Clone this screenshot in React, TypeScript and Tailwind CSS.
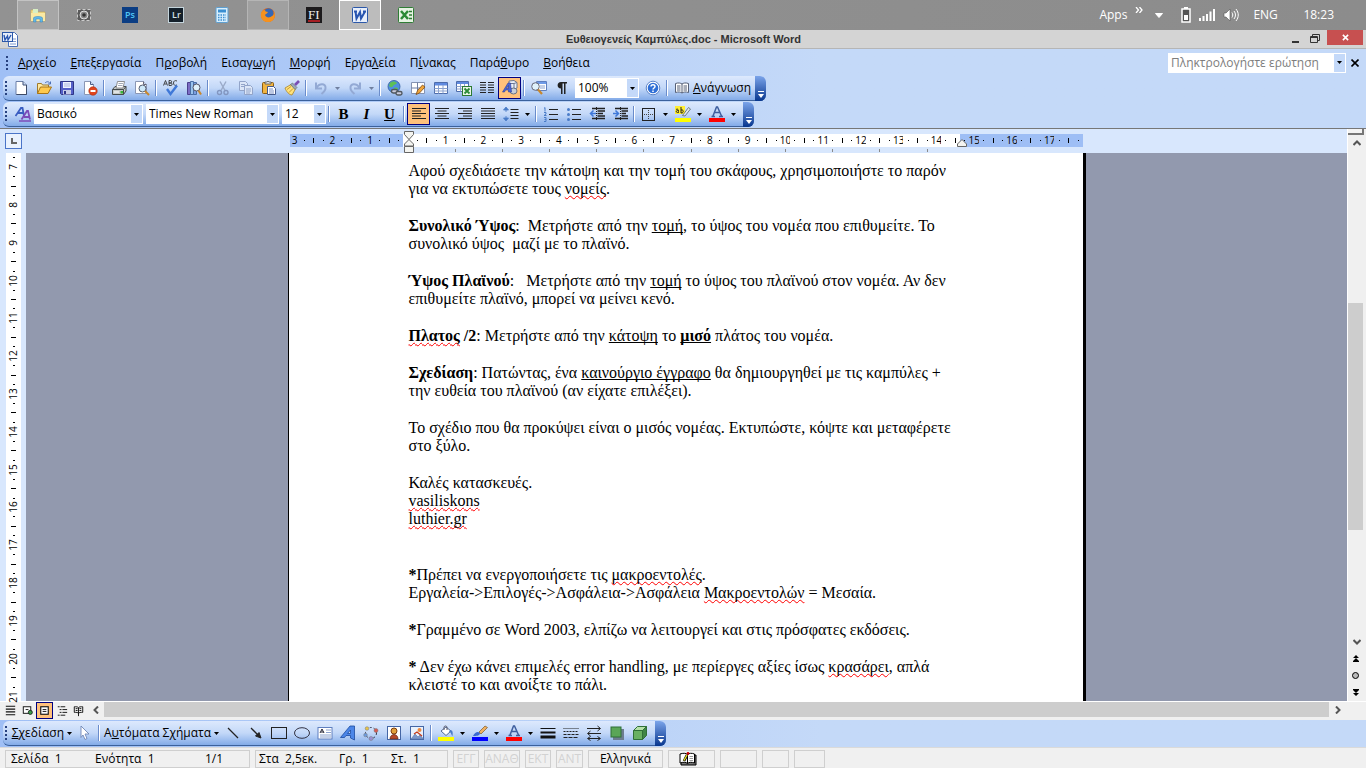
import type { ReactNode } from "react";

type IconName = keyof typeof icons

const ui = "font-['Open_Sans','Noto_Sans',sans-serif]"

const icons = {
    // Standard toolbar
    newDoc: <><path d="M3 1.500h7l3.500 3.500v9.500h-10.500z" fill="#fff" stroke="#6b7fa8" /><path d="M10 1.500v3.500h3.500" fill="#cfdcf2" stroke="#3d5078" /><path d="M3.500 14.500h10V5" fill="none" stroke="#3d4a66" /></>,
    open: <><path d="M1.500 13.500V3.500h4l1 1.500h6v3" fill="#ffe9a0" stroke="#a07a2a" /><path d="M1.500 13.500l3-6.500h11l-3.500 6.500z" fill="#ffc94d" stroke="#a87417" /><path d="M9 3c2-2 4-1.500 5 .5M14.500 1.500v2.500h-2.500" fill="none" stroke="#4b6fb5" /></>,
    save: <><path d="M1.500 1.500h13v13h-12l-1-1z" fill="#5560c8" stroke="#2e3586" /><rect x="4" y="2" width="8" height="6" fill="#eef2ff" /><path d="M5 4h6M5 6h6" stroke="#a9b5dd" /><rect x="4" y="10" width="8" height="4.500" fill="#c7cde8" /><rect x="5" y="11" width="2" height="3" fill="#2e3586" /></>,
    permission: <><path d="M2.500 1.500h6l3 3v10h-9z" fill="#fff" stroke="#8a97b5" /><path d="M8.500 1.500v3h3" fill="#cfdcf2" stroke="#4a5d88" /><circle cx="11" cy="11" r="4.200" fill="#e0451f" stroke="#a92a0d" strokeWidth=".6" /><path d="M8.500 11h5" stroke="#fff" strokeWidth="2" /></>,
    print: <><path d="M1.500 9.500l2.500-3h11v4.500l-2.500 3.500h-11z" fill="#c4c9c8" stroke="#454b4d" /><path d="M5 8l1.500-6.500h7L12 8z" fill="#fff" stroke="#777" strokeWidth=".8" /><path d="M7.500 3.500h4.500M7 5.500h4.500" stroke="#8a93a5" strokeWidth=".8" /><path d="M1.500 9.500h11v5M12.500 9.500l2.500-3" fill="none" stroke="#454b4d" /><path d="M3 12h5" stroke="#fff" /><rect x="9.500" y="11" width="2.500" height="2.500" fill="#35b535" /></>,
    preview: <><path d="M1.500 1.500h8l3 3v9h-11z" fill="#fff" stroke="#8a97b5" /><path d="M9.500 1.500v3h3" fill="#cfdcf2" stroke="#667" /><circle cx="8.500" cy="8.500" r="3.500" fill="#cfeafa" stroke="#555d70" /><path d="M11 11l4 4" stroke="#c8872c" strokeWidth="2" /></>,
    spell: <><path d="M.5 5.500l2-5 2 5M1.500 4h2M6 .5v5h2c1.500 0 1.500-2.500 0-2.500H6h1.500C9 3 9 .5 7.500.5zM14 1c-2-1-3.500 0-3.500 2s1.500 3 3.500 2" fill="none" stroke="#333" strokeWidth=".9" /><path d="M4 9l3.500 5L14 5.500" fill="none" stroke="#3f78d8" strokeWidth="2.400" /></>,
    research: <><path d="M1.500 2.500h3v12h-3z" fill="#7b6cc4" stroke="#4b3f8e" /><path d="M4.500 1.500h3v13h-3z" fill="#9ac3ee" stroke="#4a6ea6" /><path d="M7.500 2.500h3v12h-3z" fill="#7b9ee0" stroke="#4a6ea6" /><circle cx="10.500" cy="7.500" r="3.500" fill="#dff1fb" stroke="#556" /><path d="M12.500 10.500l2.500 4" stroke="#c8872c" strokeWidth="2" /></>,
    cut: <><path d="M5 1.500l5 9M11 1.500l-5 9" stroke="#9aaac8" strokeWidth="1.400" /><circle cx="4.500" cy="12.500" r="2" fill="none" stroke="#8296c0" strokeWidth="1.400" /><circle cx="11" cy="12.500" r="2" fill="none" stroke="#8296c0" strokeWidth="1.400" /></>,
    copy: <><path d="M1.500 1.500h6l2 2v7h-8z" fill="#dce6f7" stroke="#92a4c9" /><path d="M6.500 5.500h6l2 2v7h-8z" fill="#dce6f7" stroke="#92a4c9" /><path d="M3 4.500h4M3 6.500h3M8 9h5M8 11h5M8 13h4" stroke="#92a4c9" /></>,
    paste: <><rect x="1.500" y="2.500" width="11" height="11" rx="1" fill="#f0b440" stroke="#8a5c13" /><path d="M4 4V2h2l1-1 1 1h2v2z" fill="#ddd" stroke="#555" strokeWidth=".8" /><path d="M6.500 6.500h6l2 2v6h-8z" fill="#fff" stroke="#44598b" /><path d="M8 9h4M8 11h5M8 13h5" stroke="#7b91c5" /></>,
    painter: <><path d="M1 8l6-3.500 4.500 4.500-3.500 6c-3 0-6-4-7-7z" fill="#ffe27a" stroke="#a98326" strokeWidth=".8" /><path d="M3 9.500l4-3M5 12.500l4-4" stroke="#c99a34" /><path d="M6.500 4.500l2-1.500 4.500 4.500-2 2z" fill="#9ba6b8" stroke="#566" strokeWidth=".6" /><path d="M11 5l4-4" stroke="#7a4eb5" strokeWidth="2.600" /></>,
    undo: <path d="M3 2.500v6h6M3.500 8C6 3 13 3 12.500 8c0 2.500-1.500 4-4 6" fill="none" stroke="#93a9d4" strokeWidth="2" />,
    redo: <path d="M13 2.500v6H7M12.500 8C10 3 3 3 3.500 8c0 2.500 1.500 4 4 6" fill="none" stroke="#93a9d4" strokeWidth="2" />,
    globe: <><circle cx="7" cy="6.500" r="6" fill="#4f8fe0" stroke="#2d5a9c" strokeWidth=".8" /><path d="M3 3c2-2 5-2 7 0-1 2-3 1-4 3s-3 1-4 0zM7 8c2-1 4 0 4 1l-3 3z" fill="#5dc055" /><rect x="4.500" y="9.500" width="6" height="3.500" rx="1.700" fill="#ccd" stroke="#50585f" strokeWidth="1.400" /><rect x="9" y="11.500" width="6" height="3.500" rx="1.700" fill="#ccd" stroke="#50585f" strokeWidth="1.400" /></>,
    drawTable: <><path d="M1.500 2.500h13v11h-13z" fill="#fff" stroke="#8593b2" /><path d="M7.500 2.500v11M1.500 8h13" stroke="#6f7fa3" /><path d="M6 14.500l1.500-4 5-5.500 2.500 2-5.500 6z" fill="#f1a63c" stroke="#7b4a14" strokeWidth=".8" /></>,
    table: <><path d="M1.500 2.500h13v11h-13z" fill="#fff" stroke="#4d6cab" /><rect x="2" y="3" width="12" height="2.500" fill="#5f8ae0" /><path d="M1.500 8.500h13M1.500 11h13M5.500 5v8.500M10 5v8.500" stroke="#8ba2cf" /></>,
    excelTable: <><path d="M.5 1.500h12v10H.5z" fill="#fff" stroke="#4d6cab" /><rect x="1" y="2" width="11" height="2" fill="#5f8ae0" /><path d="M.5 6.500h12M.5 9h12M4.500 4v7.500M8.500 4v7.500" stroke="#8ba2cf" /><rect x="6.500" y="6.500" width="9" height="9" fill="#e9f6e7" stroke="#2c7a33" /><path d="M8.500 8.500l5 5M13.500 8.500l-5 5" stroke="#2a8a35" strokeWidth="1.800" /></>,
    columns: <path d="M1 2.500h6M1 5h6M1 7.500h6M1 10h6M1 12.500h6M9 2.500h6M9 5h6M9 7.500h6M9 10h6M9 12.500h6" stroke="#222" strokeWidth="1.200" />,
    drawing: <><path d="M7 1l5-.5 3 2V8l-3 1H7z" fill="#e9eef8" stroke="#6d7890" /><path d="M12 3.500V9M12 3.500l3-1M12 3.500H7" stroke="#6d7890" fill="none" /><ellipse cx="11.500" cy="11" rx="3.500" ry="3" fill="#c8ced8" stroke="#697284" /><path d="M.5 12L6 3h2.500l1 9H6.500v-2H3.500l-1 2zM4.500 8.500h2V5.500z" fill="#4a66d8" stroke="#2c3f99" strokeWidth=".6" fillRule="evenodd" /></>,
    docMap: <><path d="M5.500 1.500h10v9h-10z" fill="#fff" stroke="#5f7fbf" /><rect x="6" y="2" width="9" height="2" fill="#6f9be8" /><path d="M9 6h5M9 8h5" stroke="#8ba2cf" /><circle cx="4.500" cy="6.500" r="3.800" fill="#dff1fb" stroke="#667" /><path d="M7 9.500l4 4.500" stroke="#c8872c" strokeWidth="2.200" /></>,
    pilcrow: <path d="M13 2H7C2.500 2 2.500 8.500 7 8.500V14h1.500V3.500H10V14h1.500V3.500H13z" fill="#222" />,
    help: <><circle cx="8" cy="8" r="6.800" fill="#fff" stroke="#5c84c9" /><circle cx="8" cy="8" r="5.300" fill="#2f6fd6" /><path d="M6 6.500c0-2.500 4-2.500 4 0 0 1.500-2 1.500-2 3M8 10.500v1.500" fill="none" stroke="#fff" strokeWidth="1.500" /></>,
    book: <><path d="M1.500 3.500c3-1 5-.5 6.500.5 1.500-1 3.500-1.500 6.500-.5v9c-3-1-5-.5-6.500.5-1.500-1-3.500-1.500-6.500-.5z" fill="#fff" stroke="#555f75" /><path d="M8 4v9M3 6h3.500M3 8h3.500M3 10h3.500M9.500 6H13M9.500 8H13M9.500 10H13" stroke="#555f75" /></>,
    // Formatting toolbar
    styles: <><path d="M.5 10L6 2h1.500L9 10M3 7h5.500" fill="none" stroke="#3a5dc0" strokeWidth="1.800" /><path d="M6.500 13.500L12 5h1l2 8.500M9 11h5.500" fill="none" stroke="#7b4bb8" strokeWidth="1.800" /><path d="M4 15h12" stroke="#7b4bb8" strokeWidth="1.500" /></>,
    left: <path d="M1 2.500h14M1 5h9M1 7.500h14M1 10h9M1 12.500h14" stroke="#222" strokeWidth="1.200" />,
    center: <path d="M1 2.500h14M3.500 5h9M1 7.500h14M3.500 10h9M1 12.500h14" stroke="#222" strokeWidth="1.200" />,
    right: <path d="M1 2.500h14M6 5h9M1 7.500h14M6 10h9M1 12.500h14" stroke="#222" strokeWidth="1.200" />,
    justify: <path d="M1 2.500h14M1 5h14M1 7.500h14M1 10h14M1 12.500h14" stroke="#222" strokeWidth="1.200" />,
    spacing: <><path d="M3 1L.5 4h5zM3 15L.5 12h5zM3 3v3M3 10v3" fill="#4a7cc8" stroke="#4a7cc8" strokeWidth=".8" /><path d="M7.500 3.500h8M7.500 6.500h8M7.500 9.500h8M7.500 12.500h8" stroke="#222" /></>,
    numbered: <><path d="M6 3.500h9M6 8.500h9M6 13.500h9" stroke="#222" /><path d="M2 1.500v4M1 2h1M1 6.500h2v1.500L1 9.500h2.500M1 11.500h2v4H1M1.500 13.500H3" fill="none" stroke="#4a7cc8" /></>,
    bullets: <><path d="M6 3.500h9M6 8.500h9M6 13.500h9" stroke="#222" /><circle cx="2.500" cy="3.500" r="1.500" fill="#4a7cc8" /><circle cx="2.500" cy="8.500" r="1.500" fill="#4a7cc8" /><circle cx="2.500" cy="13.500" r="1.500" fill="#4a7cc8" /></>,
    outdent: <><path d="M3 2.500h13M8.500 5H16M8.500 7.500H14M8.500 10H16M3 12.500h13" stroke="#222" strokeWidth="1.400" /><path d="M7 7.500H2M4.500 4.500l-3 3 3 3" fill="none" stroke="#3f78d8" strokeWidth="1.500" /><path d="M7.500 1v14" stroke="#222" strokeDasharray="1 1" /></>,
    indent: <><path d="M3 2.500h13M9.500 5H16M9.500 7.500H14M9.500 10H16M3 12.500h13" stroke="#222" strokeWidth="1.400" /><path d="M1 7.500h5M3.500 4.500l3 3-3 3" fill="none" stroke="#3f78d8" strokeWidth="1.500" /><path d="M8.500 1v14" stroke="#222" strokeDasharray="1 1" /></>,
    border: <><rect x="1.500" y="2.500" width="12" height="12" fill="none" stroke="#222" /><path d="M7.500 4v9.500M3 8.500h9.500" stroke="#444" strokeDasharray="1 1" /></>,
    highlight: <><rect x="0" y="0" width="10" height="8" fill="#ffee32" /><path d="M1 3.500c2-1 2.500 0 2.500 3-3 .5-3-2.500 0-2M6 1v6c3 .5 3-4 0-3" fill="none" stroke="#222" /><path d="M7.500 9.500l6-8 2 1.500-5.500 7z" fill="#dfe6f0" stroke="#566" strokeWidth=".8" /><rect x="0" y="12" width="16" height="4" fill="#ff0" /></>,
    fontColor: <><path d="M4 10l3.500-9h1l4 9M5.500 6.500h5.500M2.500 10.500h3.500M10 10.500h4" fill="none" stroke="#3f5f9f" strokeWidth="1.500" /><rect x="0" y="12" width="16" height="4" fill="#f00" /></>,
    // Drawing toolbar
    pointer: <path d="M4 1l8 8H8l2 4.500-2 1L6 10l-2 2.500z" fill="#fff" stroke="#7187b5" strokeWidth=".9" />,
    line: <path d="M3 3l10 10" stroke="#222" strokeWidth="1.200" />,
    arrow: <><path d="M3 3l7 7" stroke="#222" strokeWidth="1.300" /><path d="M13 13L7.500 11 11 7.500z" fill="#222" stroke="#222" /></>,
    rect: <rect x=".5" y="2.500" width="15" height="11" fill="none" stroke="#222" />,
    oval: <ellipse cx="8" cy="8" rx="7.500" ry="5.300" fill="none" stroke="#334" />,
    textBox: <><rect x="1" y="2.500" width="14" height="11.500" fill="#fff" stroke="#5f7fbf" /><path d="M3 8l2-4 2 4M4 7h2.500" fill="none" stroke="#223" /><path d="M9 5h5M9 7.500h5M3 10h11M3 12h11" stroke="#8ba2cf" /></>,
    wordArt: <path d="M.5 12.500L10 1h4.500v14l-4-2v-2.500H6l-1.500 2zM7.500 8.500h3V5z" fill="#4b86e8" stroke="#1d4ba0" strokeWidth=".8" fillRule="evenodd" />,
    diagram: <><circle cx="8" cy="8" r="5.500" fill="none" stroke="#334" strokeDasharray="2 2" /><circle cx="4" cy="3.500" r="1.800" fill="#e8c54a" stroke="#777" strokeWidth=".5" /><circle cx="13" cy="5.500" r="2" fill="#d75a52" stroke="#777" strokeWidth=".5" /><circle cx="2.500" cy="10" r="1.800" fill="#6c9ce0" stroke="#777" strokeWidth=".5" /><circle cx="8" cy="13.500" r="2" fill="#9a8fd5" stroke="#777" strokeWidth=".5" /></>,
    clipArt: <><rect x="1.500" y="1.500" width="13" height="13" fill="#fff" stroke="#4466a5" /><circle cx="8" cy="6" r="3" fill="#e2a13a" stroke="#7a3c10" /><path d="M4 14c0-6 8-6 8 0z" fill="#b5482a" stroke="#5b2710" strokeWidth=".7" /></>,
    picture: <><rect x="1.500" y="1.500" width="13" height="13" fill="#e9f1fc" stroke="#4466a5" /><path d="M2 14l4-5 3 3 2-2 3.500 4z" fill="#7b98ca" stroke="#5976aa" strokeWidth=".6" /><circle cx="10.500" cy="5" r="2" fill="#f08a3c" /><path d="M5 9l3-2 5 4" fill="none" stroke="#c53b1a" strokeWidth="1.200" /></>,
    fill: <><path d="M3 6l5-4 5 4-5 4.500z" fill="#fff" stroke="#556c96" /><path d="M6 5V2.500c0-2 3-2 3 0V5" fill="none" stroke="#556" /><path d="M12 5c3 0 3 3 2.500 6-1.500-1-1-4-3.500-4z" fill="#4a7cc8" /><rect x="0" y="12" width="16" height="4" fill="#ff0" /></>,
    lineColor: <><path d="M1 11c2-4 5-5 7-3 0 3-4 3-7 3z" fill="#3b69d0" /><path d="M7 7l6-6 2.500 1.500L9 9z" fill="#f0b060" stroke="#7b5a2a" strokeWidth=".7" /><rect x="0" y="12" width="16" height="4" fill="#00f" /></>,
    lineStyle: <><path d="M.5 3.500h15" stroke="#111" /><path d="M.5 7.500h15" stroke="#111" strokeWidth="2" /><path d="M.5 12h15" stroke="#111" strokeWidth="3" /></>,
    dash: <><path d="M.5 3.500h15" stroke="#222" strokeDasharray="1 1" /><path d="M.5 6.500h15" stroke="#222" strokeDasharray="2 1" /><path d="M.5 9.500h15" stroke="#222" strokeDasharray="3 1" /><path d="M.5 12.500h15" stroke="#222" strokeDasharray="4 1" /></>,
    arrows: <path d="M1 3.500h13M11.500 1l3 2.500-3 2.500M2 8.500h13M4.500 6l-3 2.500 3 2.500M2 13.500h12M4.500 11.500l-3 2 3 2M11.500 11.500l3 2-3 2" fill="none" stroke="#222" />,
    shadow: <><rect x="4" y="4" width="11" height="11" fill="#6c7d90" /><rect x="2" y="2" width="10" height="10" fill="#5aa657" stroke="#2f6f38" /></>,
    cube: <><path d="M1.500 5.500h9v9h-9z" fill="#68b062" stroke="#2f6f38" /><path d="M1.500 5.500l4-4h9l-4 4z" fill="#b5e0a8" stroke="#2f6f38" /><path d="M10.500 14.500l4-4v-9l-4 4z" fill="#3f8546" stroke="#2f6f38" /></>,
    // View buttons
    normalView: <path d="M3 3.500h10M3 6.500h10M3 9.500h10M3 12.500h10" stroke="#111" strokeWidth="1.200" />,
    webView: <><rect x="3.500" y="4" width="8" height="7" fill="#fff" stroke="#111" /><path d="M6 7h3" stroke="#111" /><circle cx="11" cy="10" r="2.200" fill="#3a9a4a" stroke="#111" strokeWidth=".8" /></>,
    printView: <><rect x="4" y="4" width="8" height="8" fill="#fff" stroke="#111" strokeWidth="1.200" /><path d="M6 7h4M6 9h4" stroke="#111" /></>,
    outlineView: <path d="M4 4h2M7 4h5M6 7h2M9 7h5M6 10h2M9 10h5M4 13h2M7 13h5" stroke="#111" />,
    readView: <path d="M8 5v9M3.500 4c2 0 4 0 4.500 1 .5-1 2.500-1 4.500-1v6c-2 0-4 0-4.500 1-.5-1-2.500-1-4.500-1zM5 6h2M5 8h2M9 6h2M9 8h2" fill="none" stroke="#111" />,
}

function Icon({ name, size = "size-4" }: { name: IconName; size?: string }) {
    return <svg viewBox="0 0 16 16" className={`${size} shrink-0`} aria-hidden="true">{icons[name]}</svg>
}

function Caret({ dim }: { dim?: boolean }) {
    return (
        <svg viewBox="0 0 5 3" className="h-[3px] w-[5px] shrink-0" aria-hidden="true">
            <path d="M0 0h5L2.500 3z" fill={dim ? "#6f7f9f" : "#000"} />
        </svg>
    )
}

function Tool({ name, label, active, menu, dim }: { name: IconName; label: string; active?: boolean; menu?: boolean; dim?: boolean }) {
    return (
        <>
            <button
                aria-label={label}
                aria-pressed={active}
                className={`flex h-[22px] w-[23px] shrink-0 items-center justify-center ${active ? "border border-[#000080] bg-[#ffc17b]" : ""}`}
            >
                <Icon name={name} />
            </button>
            {menu && (
                <button aria-label={`${label}, επιλογές`} className="flex h-[22px] w-[11px] shrink-0 items-center justify-center">
                    <Caret dim={dim} />
                </button>
            )}
        </>
    )
}

function Separator() {
    return <span className="mx-[2px] h-4 w-[2px] shrink-0 border-r border-l border-l-[#6a8ccb] border-r-white" />
}

function Combo({ label, value, width }: { label: string; value: string; width: string }) {
    return (
        <div className={`relative flex h-5 shrink-0 bg-white ${width}`}>
            <select aria-label={label} className="w-full appearance-none bg-transparent pl-[3px] text-xs leading-5 text-black">
                <option>{value}</option>
            </select>
            <span className="pointer-events-none absolute inset-y-px right-px flex w-[11px] items-center justify-center bg-[#c4d9f9]">
                <Caret />
            </span>
        </div>
    )
}

function Grip() {
    return (
        <span className="flex w-[6px] shrink-0 flex-col items-center gap-[2px]">
            {[0, 1, 2, 3].map(i => <span key={i} className="size-[2px] bg-[#27417f]" />)}
        </span>
    )
}

function Toolbar({ label, children }: { label: string; children: ReactNode }) {
    return (
        <div role="toolbar" aria-label={label} className="ml-[3px] flex h-[25px] w-fit items-center rounded-md border-b border-[#3b619c] bg-linear-to-b from-[#dde9fd] via-[#c3d8f8] to-[#83abe8]">
            <Grip />
            {children}
            <button aria-label="Επιλογές γραμμής εργαλείων" className="ml-1 flex h-[25px] w-[11px] flex-col items-center justify-end gap-[2px] rounded-r-md bg-linear-to-b from-[#7ba4ea] to-[#06368e] pb-[3px]">
                <span className="h-px w-[6px] bg-white" />
                <svg viewBox="0 0 6 4" className="h-1 w-[6px]" aria-hidden="true"><path d="M0 0h6L3 4z" fill="#fff" /></svg>
            </button>
        </div>
    )
}

const taskIcons: { label: string; box?: string; art: ReactNode }[] = [
    { label: "Explorer", box: "border-[#c3c3c3] bg-[#a6a6a6]", art: <><path d="M1 3h5l1 2h8v9H1z" fill="#f3dd8c" stroke="#c9a94c" strokeWidth=".6" /><path d="M3 2h5v4H3z" fill="#d8efc4" /><path d="M1 6h14v8H1z" fill="#fbe9a3" /><path d="M3.500 15v-4c0-2 9-2 9 0v4h-2.500v-3H6v3z" fill="#62b7e8" stroke="#3584bb" strokeWidth=".5" /></> },
    { label: "Camera", art: <><rect x="1.500" y="2.500" width="13" height="11" fill="#5a5a5a" stroke="#ccc" strokeDasharray="3 2" /><circle cx="8" cy="8" r="4" fill="#8a8a8a" stroke="#ddd" /><circle cx="8" cy="8" r="1.800" fill="#333" /></> },
    { label: "Photoshop", art: <><rect width="16" height="16" fill="#0b3d83" /><text x="3" y="11" fontSize="9" fontWeight="600" fill="#4fc6f5" fontFamily="Open Sans">Ps</text></> },
    { label: "Lightroom", art: <><rect x=".5" y=".5" width="15" height="15" fill="#14202b" stroke="#c5d5dc" /><text x="4" y="11" fontSize="9" fontWeight="600" fill="#d5e3e8" fontFamily="Open Sans">Lr</text></> },
    { label: "Calculator", art: <><rect x="2" y=".5" width="12" height="15" rx="1" fill="#d8eefc" stroke="#5f9fd0" /><rect x="4" y="2.500" width="8" height="3" fill="#3a8fd2" /><path d="M4 8h8M4 10.500h8M4 13h8" stroke="#3a8fd2" strokeWidth="1.500" strokeDasharray="1.500 1" /></> },
    { label: "Firefox", box: "border-[#b5b5b5] bg-[#a0a0a0]", art: <><circle cx="8" cy="8" r="7" fill="#e66a16" /><circle cx="8.500" cy="6.500" r="5.200" fill="#3567b5" /><path d="M1 6c1-2 2-3 4-3 0 1 1 2 3 2-1 2-3 2-3 3 1 3 5 3 7 1 2-1 2-3 1.500-5C17 10 13 15 8 15 3 15 0 11 1 6z" fill="#f6921e" /></> },
    { label: "FI", art: <><rect width="16" height="16" fill="#1c1a1c" /><text x="2" y="12" fontSize="13" fill="#eee" fontFamily="Liberation Serif">FI</text><path d="M2 14h12" stroke="#d31f26" strokeWidth="1.500" /></> },
    { label: "Word", box: "border-white bg-[#bcbcbc]", art: <><rect x=".5" y=".5" width="15" height="15" rx="1" fill="#e8effb" stroke="#2c58a8" /><path d="M2 4.500h3M3.500 4.500l1 7L8 5l1 6.500 4-7M11 4.500h3" fill="none" stroke="#2855b0" strokeWidth="2" /></> },
    { label: "Excel", art: <><rect x=".5" y=".5" width="15" height="15" rx="1" fill="#e6f3e3" stroke="#2f7d35" /><path d="M3 4l7 8M10 4l-7 8" stroke="#2c8a36" strokeWidth="2.500" /><path d="M11 4.500h3M11 8h3M11 11.500h3" stroke="#2f7d35" strokeWidth="1.500" /></> },
]

function TaskBar() {
    return (
        <header className="flex h-[30px] shrink-0 items-center bg-linear-to-r from-[#929292] to-[#8c8c8c] pr-8 pl-[17px] text-xs text-white">
            <nav className="flex gap-1">
                {taskIcons.map(t => (
                    <button key={t.label} aria-label={t.label} className={`flex h-[30px] w-[42px] items-center justify-center border ${t.box ?? "border-transparent"}`}>
                        <svg viewBox="0 0 16 16" className="size-4" aria-hidden="true">{t.art}</svg>
                    </button>
                ))}
            </nav>
            <div className="ml-auto flex items-center">
                <span>Apps</span>
                <svg viewBox="0 0 8 6" className="mb-[10px] ml-2 h-[6px] w-2" aria-hidden="true"><path d="M1 0l2.500 3L1 6M4.500 0L7 3 4.500 6" fill="none" stroke="#fff" strokeWidth="1.300" /></svg>
                <svg viewBox="0 0 8 5" className="ml-3 h-[5px] w-2" aria-hidden="true"><path d="M.5.5h7L4 4.500z" fill="#fff" stroke="#fff" /></svg>
                <svg viewBox="0 0 10 16" className="ml-[18px] h-4 w-[10px]" aria-hidden="true"><path d="M3 0h4v2H3z" fill="#fff" /><rect x="1" y="2" width="8" height="13" fill="#555" stroke="#fff" strokeWidth="1.500" /><path d="M3 8h4v5H3z" fill="#fff" /></svg>
                <svg viewBox="0 0 16 12" className="ml-2 h-3 w-4" aria-hidden="true"><path d="M0 9h2v3H0zM3.500 7h2v5h-2zM7 5h2v7H7zM10.500 2.500h2V12h-2zM14 0h2v12h-2z" fill="#fff" /></svg>
                <svg viewBox="0 0 16 14" className="ml-2 h-[14px] w-4" aria-hidden="true"><path d="M1 5h2l4-4v12L3 9H1z" fill="#fff" stroke="#555" strokeWidth=".6" /><path d="M9 4.500c1 1.500 1 3.500 0 5M11 3c2 2.500 2 5.500 0 8M13 1c3 4 3 8 0 12" fill="none" stroke="#fff" /></svg>
                <span className="ml-[14px] w-[50px]">ENG</span>
                <time>18:23</time>
            </div>
        </header>
    )
}

function TitleBar() {
    return (
        <div className="flex h-[19px] shrink-0 items-center border-b border-[#b5b5b5] bg-[#d4d4d4] pr-[3px] pl-[2px]">
            <svg viewBox="0 0 16 16" className="size-4" aria-hidden="true">
                <path d="M6.500 1.500h6l3 3v11h-9z" fill="#fff" stroke="#4a6fb5" />
                <path d="M11 8h3M11 10.500h3M8 13h6" stroke="#7f9ad0" />
                <rect x=".5" y="1.500" width="10" height="9" fill="#e8effb" stroke="#2c58a8" />
                <path d="M2 4l1 5 2.500-4L6 9l3-5" fill="none" stroke="#2855b0" strokeWidth="1.400" />
            </svg>
            <h1 className="ml-16 flex-1 text-center font-['Liberation_Sans',sans-serif] text-[11px] leading-[18px] font-bold text-[#333]">Ευθειογενείς Καμπύλες.doc - Microsoft Word</h1>
            <button aria-label="Ελαχιστοποίηση" className="flex h-[15px] w-5 items-end justify-center pb-[4px]"><span className="h-[2px] w-[7px] bg-[#333]" /></button>
            <button aria-label="Επαναφορά" className="flex h-[15px] w-5 items-center justify-center">
                <svg viewBox="0 0 10 10" className="size-[10px]" aria-hidden="true"><path d="M2.500 2.500v-2h7v6h-2M.5 2.500h7v6h-7zM.5 3.500h7" fill="none" stroke="#333" /></svg>
            </button>
            <button aria-label="Κλείσιμο" className="mb-[3px] ml-[2px] flex h-[15px] w-9 items-center justify-center bg-[#c75050]">
                <svg viewBox="0 0 8 8" className="size-[7px]" aria-hidden="true"><path d="M1 1l6 6M7 1L1 7" stroke="#fff" strokeWidth="1.800" /></svg>
            </button>
        </div>
    )
}

// [before, accelerator, after]
const menus = [
    ["", "Α", "ρχείο"],
    ["", "Ε", "πεξεργασία"],
    ["Π", "ρ", "οβολή"],
    ["Εισαγ", "ω", "γή"],
    ["", "Μ", "ορφή"],
    ["Εργα", "λ", "εία"],
    ["Π", "ί", "νακας"],
    ["Παρά", "θ", "υρο"],
    ["", "Β", "οήθεια"],
]

function MenuBar() {
    return (
        <div className="flex h-[27px] items-center pr-[6px] pl-1">
            <Grip />
            <nav className="ml-2 flex gap-[14px]">
                {menus.map(([a, b, c]) => <button key={a + b + c}>{a}<u>{b}</u>{c}</button>)}
            </nav>
            <div className="ml-auto flex h-5 w-[178px] bg-white p-px">
                <input aria-label="Ερώτηση" placeholder="Πληκτρολογήστε ερώτηση" className="w-full min-w-0 pl-[2px] text-xs leading-[18px] placeholder:text-[#7d7d7d]" />
                <button aria-label="Πρόσφατες ερωτήσεις" className="flex w-[11px] shrink-0 items-center justify-center bg-[#c4d9f9]"><Caret /></button>
            </div>
            <button aria-label="Κλείσιμο εγγράφου" className="ml-1 flex size-[10px] items-center justify-center">
                <svg viewBox="0 0 8 8" className="size-2" aria-hidden="true"><path d="M.5.5l7 7M7.500.5l-7 7" stroke="#000" strokeWidth="1.600" /></svg>
            </button>
        </div>
    )
}

function StandardBar() {
    return (
        <Toolbar label="Βασική">
            <Tool name="newDoc" label="Νέο" />
            <Tool name="open" label="Άνοιγμα" />
            <Tool name="save" label="Αποθήκευση" />
            <Tool name="permission" label="Δικαιώματα" />
            <Separator />
            <Tool name="print" label="Εκτύπωση" />
            <Tool name="preview" label="Προεπισκόπηση" />
            <Separator />
            <Tool name="spell" label="Ορθογραφία" />
            <Tool name="research" label="Έρευνα" />
            <Separator />
            <Tool name="cut" label="Αποκοπή" />
            <Tool name="copy" label="Αντιγραφή" />
            <Tool name="paste" label="Επικόλληση" />
            <Tool name="painter" label="Πινέλο μορφοποίησης" />
            <Separator />
            <Tool name="undo" label="Αναίρεση" menu dim />
            <Tool name="redo" label="Ακύρωση αναίρεσης" menu dim />
            <Separator />
            <Tool name="globe" label="Υπερ-σύνδεση" />
            <Tool name="drawTable" label="Πίνακες και περιγράμματα" />
            <Tool name="table" label="Εισαγωγή πίνακα" />
            <Tool name="excelTable" label="Φύλλο Excel" />
            <Tool name="columns" label="Στήλες" />
            <Tool name="drawing" label="Σχεδίαση" active />
            <Separator />
            <Tool name="docMap" label="Χάρτης εγγράφου" />
            <Tool name="pilcrow" label="Εμφάνιση όλων" />
            <div className="px-[2px]"><Combo label="Ζουμ" value="100%" width="w-16" /></div>
            <Tool name="help" label="Βοήθεια" />
            <Separator />
            <button className="flex items-center gap-[3px] pl-1"><Icon name="book" /><span><u>Α</u>νάγνωση</span></button>
        </Toolbar>
    )
}

function FormattingBar() {
    const letter = "h-[22px] w-[23px] shrink-0 font-['Liberation_Serif',serif] text-[15px] leading-[22px] font-bold"
    return (
        <Toolbar label="Μορφοποίηση">
            <span className="w-[2px]" />
            <Tool name="styles" label="Στυλ και μορφοποίηση" />
            <div className="flex gap-[3px]">
                <Combo label="Στυλ" value="Βασικό" width="w-[109px]" />
                <Combo label="Γραμματοσειρά" value="Times New Roman" width="w-[133px]" />
                <Combo label="Μέγεθος" value="12" width="w-11" />
            </div>
            <Separator />
            <button className={letter}>B</button>
            <button className={`${letter} italic`}>I</button>
            <button className={`${letter} underline`}>U</button>
            <Separator />
            <Tool name="left" label="Στοίχιση αριστερά" active />
            <Tool name="center" label="Στοίχιση στο κέντρο" />
            <Tool name="right" label="Στοίχιση δεξιά" />
            <Tool name="justify" label="Πλήρης στοίχιση" />
            <Tool name="spacing" label="Διάστιχο" menu />
            <Separator />
            <Tool name="numbered" label="Αρίθμηση" />
            <Tool name="bullets" label="Κουκκίδες" />
            <Tool name="outdent" label="Μείωση εσοχής" />
            <Tool name="indent" label="Αύξηση εσοχής" />
            <Separator />
            <Tool name="border" label="Περίγραμμα" menu />
            <Tool name="highlight" label="Επισήμανση" menu />
            <Tool name="fontColor" label="Χρώμα γραμματοσειράς" menu />
        </Toolbar>
    )
}

function TopRuler() {
    return (
        <div className="flex h-6 bg-[#d8e7fd]">
            <div className="w-[26px] shrink-0 pt-1 pl-[5px]">
                <button aria-label="Στηλοθέτης" className="flex h-[16px] w-[17px] items-center justify-center border border-[#4a74c8] bg-[#eaf2fe]">
                    <span className="size-[6px] border-b-2 border-l-2 border-[#666]" />
                </button>
            </div>
            <div className="relative mx-auto flex w-[793px]">
                {Array.from({ length: 84 }, (_, i) => (
                    <div key={i} className="flex min-w-0 flex-1 flex-col items-center pt-[5px]">
                        <div className={`flex h-[13px] w-full items-center justify-center ${i < 12 || i > 70 ? "bg-[#9ebef5]" : "bg-white"}`}>
                            {i % 4 === 0
                                ? i !== 12 && <span className="flex w-0 justify-center text-[10px] leading-[13px]">{Math.abs(i - 12) / 4}</span>
                                : <span className={`w-px bg-black ${i % 4 === 2 ? "h-[5px]" : "h-px"}`} />}
                        </div>
                        {i > 12 && i < 71 && (i - 12) % 5 === 0 && <span className="mt-[2px] h-[3px] w-px bg-[#8a8a8a]" />}
                    </div>
                ))}
                <svg viewBox="0 0 10 22" className="absolute top-[2px] left-[114px] h-[22px] w-[10px]" aria-hidden="true">
                    <path d="M.5.5h9v3L5 8.500.5 3.500zM5 8.500l4.500 4.500v2h-9v-2zM.5 15.500h9v6h-9z" fill="#f4f4f0" stroke="#666" />
                </svg>
                <svg viewBox="0 0 10 8" className="absolute top-[10px] left-[667px] h-2 w-[10px]" aria-hidden="true">
                    <path d="M5 .5l4.500 4.500v2.500h-9V5z" fill="#f4f4f0" stroke="#666" />
                </svg>
            </div>
        </div>
    )
}

function SideRuler() {
    return (
        <div className="flex w-[26px] shrink-0 flex-col bg-[#d8e7fd] pr-[5px] pl-[6px]">
            {Array.from({ length: 58 }, (_, i) => (
                <div key={i} className="flex min-h-0 flex-1 items-center justify-center bg-white">
                    {i % 4 === 1
                        ? <span className="flex h-0 -rotate-90 items-center text-[10px]">{7 + (i - 1) / 4}</span>
                        : <span className={`h-px bg-black ${i % 4 === 3 ? "w-[5px]" : "w-[2px]"}`} />}
                </div>
            ))}
        </div>
    )
}

function Typo({ children }: { children: ReactNode }) {
    return <span className="underline decoration-[#f00] decoration-wavy decoration-1 underline-offset-1 [text-decoration-skip-ink:none]">{children}</span>
}

function Page() {
    return (
        <article className="mx-auto w-[798px] border-r-[3px] border-l border-black bg-white pt-[9px] pl-[120px] font-['Liberation_Serif',serif] text-base leading-[18px] whitespace-pre text-black [text-decoration-skip-ink:none]">
            <div className="flex flex-col gap-[19px]">
                <p>Αφού σχεδιάσετε την κάτοψη και την τομή του σκάφους, χρησιμοποιήστε το παρόν<br />για να εκτυπώσετε τους <Typo>νομείς</Typo>.</p>
                <p><b>Συνολικό Ύψος</b>:{"  "}Μετρήστε από την <u>τομή</u>, το ύψος του νομέα που επιθυμείτε. Το<br />συνολικό ύψος{"  "}μαζί με το πλαϊνό.</p>
                <p><b>Ύψος Πλαϊνού</b>:{"   "}Μετρήστε από την <u>τομή</u> το ύψος του πλαϊνού στον νομέα. Αν δεν<br />επιθυμείτε πλαϊνό, μπορεί να μείνει κενό.</p>
                <p><b><Typo>Πλατος</Typo> /2</b>: Μετρήστε από την <u>κάτοψη</u> το <b><u>μισό</u></b> πλάτος του νομέα.</p>
                <p><b>Σχεδίαση</b>: Πατώντας, ένα <u>καινούργιο έγγραφο</u> θα δημιουργηθεί με τις καμπύλες +<br />την ευθεία του πλαϊνού (αν είχατε επιλέξει).</p>
                <p>Το σχέδιο που θα προκύψει είναι ο μισός νομέας. Εκτυπώστε, κόψτε και μεταφέρετε<br />στο ξύλο.</p>
                <p>Καλές κατασκευές.<br /><Typo>vasiliskons</Typo><br /><Typo>luthier.gr</Typo></p>
                <p className="pt-[19px]"><b>*</b>Πρέπει να ενεργοποιήσετε τις <Typo>μακροεντολές</Typo>.<br />Εργαλεία-&gt;Επιλογές-&gt;Ασφάλεια-&gt;Ασφάλεια <Typo>Μακροεντολών</Typo> = Μεσαία.</p>
                <p><b>*</b>Γραμμένο σε Word 2003, ελπίζω να λειτουργεί και στις πρόσφατες εκδόσεις.</p>
                <p><b>*</b> Δεν έχω κάνει επιμελές error handling, με περίεργες αξίες ίσως <Typo>κρασάρει</Typo>, απλά<br />κλειστέ το και ανοίξτε το πάλι.</p>
            </div>
        </article>
    )
}

function Chevron({ turn, label }: { turn: string; label: string }) {
    return (
        <button aria-label={label} className="flex h-4 w-[17px] shrink-0 items-center justify-center">
            <svg viewBox="0 0 8 8" className={`size-2 ${turn}`} aria-hidden="true"><path d="M.5 6L4 2.500 7.500 6" fill="none" stroke="#555" strokeWidth="2" /></svg>
        </button>
    )
}

function VerticalScroll() {
    const jump = "flex h-[17px] w-[15px] items-center justify-center"
    return (
        <div className="flex w-[19px] shrink-0 flex-col border-l border-white bg-[#f0f0f0]">
            <span className="h-[6px] w-4 shrink-0 border-r-2 border-b-2 border-[#777] bg-[#f4f4f4]" />
            <Chevron turn="" label="Κύλιση επάνω" />
            <div className="flex flex-1 flex-col">
                <span className="flex-[152]" />
                <span className="w-[15px] flex-[227] bg-[#cdcdcd]" />
                <span className="flex-[104]" />
            </div>
            <Chevron turn="rotate-180" label="Κύλιση κάτω" />
            <button aria-label="Προηγούμενη σελίδα" className={jump}><svg viewBox="0 0 6 7" className="h-[7px] w-[6px]"><path d="M3 0l3 3H0zM3 3l3 3H0zM0 6h6v1H0z" /></svg></button>
            <button aria-label="Επιλογή αντικειμένου" className={jump}><span className="size-[7px] rounded-full border border-black bg-[#bbb]" /></button>
            <button aria-label="Επόμενη σελίδα" className={jump}><svg viewBox="0 0 6 7" className="h-[7px] w-[6px]"><path d="M3 7L0 4h6zM3 4L0 1h6zM0 0h6v1H0z" /></svg></button>
        </div>
    )
}

const views: { name: IconName; label: string }[] = [
    { name: "normalView", label: "Κανονική προβολή" },
    { name: "webView", label: "Διάταξη Web" },
    { name: "printView", label: "Διάταξη εκτύπωσης" },
    { name: "outlineView", label: "Διάρθρωση" },
    { name: "readView", label: "Διάταξη ανάγνωσης" },
]

function HorizontalScroll() {
    return (
        <div className="flex h-[19px] shrink-0 items-start border-t border-white bg-[#f0f0f0] pl-[2px]">
            {views.map(v => (
                <button key={v.name} aria-label={v.label} className={`flex h-[17px] w-[17px] items-center justify-center border ${v.name === "printView" ? "border-[#000080] bg-[#ffc17b]" : "border-transparent"}`}>
                    <Icon name={v.name} size="size-[15px]" />
                </button>
            ))}
            <Chevron turn="-rotate-90" label="Κύλιση αριστερά" />
            <span className="h-[15px] flex-1 bg-[#cdcdcd]" />
            <Chevron turn="rotate-90" label="Κύλιση δεξιά" />
            <span className="w-5" />
        </div>
    )
}

function DrawingBar() {
    return (
        <Toolbar label="Σχεδίαση">
            <button className="flex w-16 items-center justify-end gap-[3px] pr-px"><span><u>Σ</u>χεδίαση</span><Caret /></button>
            <Tool name="pointer" label="Επιλογή αντικειμένων" />
            <Separator />
            <button className="flex w-[119px] items-center justify-center gap-[3px]"><span>Α<u>υ</u>τόματα Σχήματα</span><Caret /></button>
            <Tool name="line" label="Γραμμή" />
            <Tool name="arrow" label="Βέλος" />
            <Tool name="rect" label="Ορθογώνιο" />
            <Tool name="oval" label="Έλλειψη" />
            <Tool name="textBox" label="Πλαίσιο κειμένου" />
            <Tool name="wordArt" label="WordArt" />
            <Tool name="diagram" label="Διάγραμμα" />
            <Tool name="clipArt" label="Clip Art" />
            <Tool name="picture" label="Εικόνα" />
            <Separator />
            <Tool name="fill" label="Χρώμα γεμίσματος" menu />
            <Tool name="lineColor" label="Χρώμα γραμμής" menu />
            <Tool name="fontColor" label="Χρώμα γραμματοσειράς" menu />
            <Tool name="lineStyle" label="Στυλ γραμμής" />
            <Tool name="dash" label="Στυλ παύλας" />
            <Tool name="arrows" label="Στυλ βέλους" />
            <Tool name="shadow" label="Στυλ σκιάς" />
            <Tool name="cube" label="Στυλ 3-Δ" />
        </Toolbar>
    )
}

function StatusBar() {
    const cell = "flex h-[18px] items-center border border-[#cfcfcf] leading-4 whitespace-pre"
    return (
        <footer className="flex h-[21px] shrink-0 items-end gap-[5px] border-t border-[#dadada] bg-[#f0f0f0] pl-[5px] text-xs text-black">
            <div className={`${cell} w-[245px] pl-[5px]`}>
                <span className="w-[84px]">Σελίδα{"  "}1</span>
                <span className="w-[110px]">Ενότητα{"  "}1</span>
                <span>1/1</span>
            </div>
            <div className={`${cell} w-[193px] pl-[3px]`}>
                <span className="w-[80px]">Στα{"  "}2,5εκ.</span>
                <span className="w-[52px]">Γρ.{"  "}1</span>
                <span>Στ.{"  "}1</span>
            </div>
            <button className={`${cell} w-[26px] justify-center text-[#d2d2d2]`}>ΕΓΓ</button>
            <button className={`${cell} w-[36px] justify-center text-[#d2d2d2]`}>ΑΝΑΘ</button>
            <button className={`${cell} w-[26px] justify-center text-[#d2d2d2]`}>ΕΚΤ</button>
            <button className={`${cell} w-[27px] justify-center text-[#d2d2d2]`}>ΑΝΤ</button>
            <div className={`${cell} w-[75px] justify-center`}>Ελληνικά</div>
            <div className={`${cell} w-[47px] pl-[10px]`}>
                <svg viewBox="0 0 18 14" className="h-[14px] w-[18px]" aria-hidden="true">
                    <path d="M2 3h15v10H2z" fill="#777" stroke="#000" />
                    <path d="M1 11V2c3-1 6-1 7.500.5C10 1 13 1 15.500 2v9c-2.500-1-5.500-1-7 .5C7 10 4 10 1 11z" fill="#fff" stroke="#000" />
                    <path d="M8.500 2v9.500" stroke="#000" />
                    <path d="M10.500 4.500h3.500M10.500 6.500h3.500M10.500 8.500h3.500" stroke="#999" />
                    <path d="M5 9l3-6" stroke="#000" strokeWidth="2.600" />
                    <path d="M5 8.500l3-5.500" stroke="#e8e020" strokeWidth="1.400" />
                    <circle cx="9" cy="1.500" r="1.400" fill="#c00" />
                </svg>
            </div>
            <div className={`${cell} w-[37px]`} />
            <div className={`${cell} w-[27px]`} />
            <div className={`${cell} w-[31px]`} />
        </footer>
    )
}

export default function App() {
    return (
        <div className={`flex h-screen flex-col overflow-hidden bg-[#f0f0f0] text-xs text-black ${ui}`}>
            <TaskBar />
            <TitleBar />
            <div className="flex h-[79px] shrink-0 flex-col bg-linear-to-r from-[#9fbff5] to-[#c4d9f8] to-60%">
                <MenuBar />
                <div className="flex flex-col gap-px">
                    <StandardBar />
                    <FormattingBar />
                </div>
            </div>
            <div className="flex min-h-0 flex-1 border-t border-[#777]">
                <div className="flex min-w-0 flex-1 flex-col">
                    <TopRuler />
                    <div className="flex min-h-0 flex-1">
                        <SideRuler />
                        <main className="flex flex-1 items-stretch overflow-hidden bg-[#9299ae]"><Page /></main>
                    </div>
                </div>
                <VerticalScroll />
            </div>
            <HorizontalScroll />
            <div className="h-[27px] shrink-0 bg-linear-to-r from-[#9fbff5] to-[#c4d9f8] to-60% pt-px"><DrawingBar /></div>
            <StatusBar />
        </div>
    )
}
